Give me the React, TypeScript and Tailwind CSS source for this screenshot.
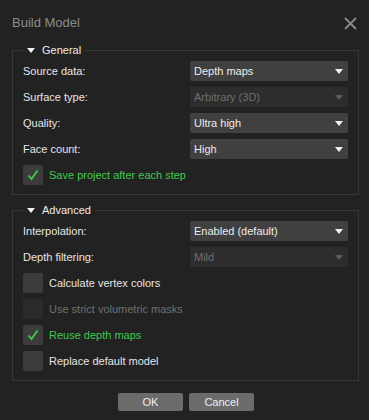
import React from "react"

const font = { fontFamily: '"Liberation Sans", Arial, sans-serif' }

function Arrow({ dim }: { dim?: boolean }) {
  return (
    <svg width="8" height="5" viewBox="0 0 8 5" className="shrink-0">
      <polygon points="0,0 8,0 4,5" fill={dim ? "#5c5c5c" : "#f2f2f2"} />
    </svg>
  )
}

function Select({ value, disabled }: { value: string; disabled?: boolean }) {
  return (
    <div
      className={`flex items-center justify-between w-[158px] h-[20px] rounded-[2px] pl-[4px] pr-[5px] ${
        disabled ? "bg-[#2d2d2d] text-[#6e6e6e]" : "bg-[#404040] text-[#ececec]"
      }`}
    >
      <span>{value}</span>
      <Arrow dim={disabled} />
    </div>
  )
}

function Row({ label, value, disabled }: { label: string; value: string; disabled?: boolean }) {
  return (
    <div className="flex items-center h-[20px]">
      <span className="w-[167px] text-[#e6e6e6]">{label}</span>
      <Select value={value} disabled={disabled} />
    </div>
  )
}

function Check({ label, checked, disabled }: { label: string; checked?: boolean; disabled?: boolean }) {
  return (
    <div className="flex items-center h-[20px] gap-[6px]">
      <div
        className={`w-[20px] h-[20px] rounded-[2px] flex items-center justify-center ${
          disabled ? "bg-[#2b2b2b]" : "bg-[#3c3c3c]"
        }`}
      >
        {checked && (
          <svg width="12" height="12" viewBox="0 0 12 12">
            <polyline points="1.5,6.5 4.5,10 10.5,1.5" fill="none" stroke="#3ccb4c" strokeWidth="1.8" />
          </svg>
        )}
      </div>
      <span className={checked ? "text-[#3ccb4c]" : disabled ? "text-[#707070]" : "text-[#e6e6e6]"}>{label}</span>
    </div>
  )
}

function Group({ title, children, className }: { title: string; children: React.ReactNode; className?: string }) {
  return (
    <fieldset className={`border border-[#373737] mx-[12px] pl-[10px] pr-[10px] pb-[9px] pt-[4px] ${className ?? ""}`}>
      <legend className="px-[4px] h-[14px] flex items-center gap-[7px]">
        <Arrow />
        <span className="text-[#ececec]">{title}</span>
      </legend>
      <div className="flex flex-col gap-[6px]">{children}</div>
    </fieldset>
  )
}

export default function App() {
  return (
    <div className="w-[369px] h-[420px] bg-[#222222] text-[11px] flex flex-col" style={font}>
      <div className="flex items-center justify-between h-[43px] pt-[3px] pl-[12px] pr-[12px]">
        <span className="text-[13px] text-[#8c8c8c]">Build Model</span>
        <svg width="13" height="13" viewBox="0 0 13 13">
          <path d="M1 1 L12 12 M12 1 L1 12" stroke="#8c8c8c" strokeWidth="1.8" />
        </svg>
      </div>
      <Group title="General">
        <Row label="Source data:" value="Depth maps" />
        <Row label="Surface type:" value="Arbitrary (3D)" disabled />
        <Row label="Quality:" value="Ultra high" />
        <Row label="Face count:" value="High" />
        <Check label="Save project after each step" checked />
      </Group>
      <Group title="Advanced" className="mt-[8px]">
        <Row label="Interpolation:" value="Enabled (default)" />
        <Row label="Depth filtering:" value="Mild" disabled />
        <Check label="Calculate vertex colors" />
        <Check label="Use strict volumetric masks" disabled />
        <Check label="Reuse depth maps" checked />
        <Check label="Replace default model" />
      </Group>
      <div className="flex justify-center gap-[6px] mt-[12px] pl-[3px]">
        <button className="w-[65px] h-[18px] rounded-[2px] bg-[#6b6b6b] text-[#f0f0f0]">OK</button>
        <button className="w-[65px] h-[18px] rounded-[2px] bg-[#6b6b6b] text-[#f0f0f0]">Cancel</button>
      </div>
    </div>
  )
}
